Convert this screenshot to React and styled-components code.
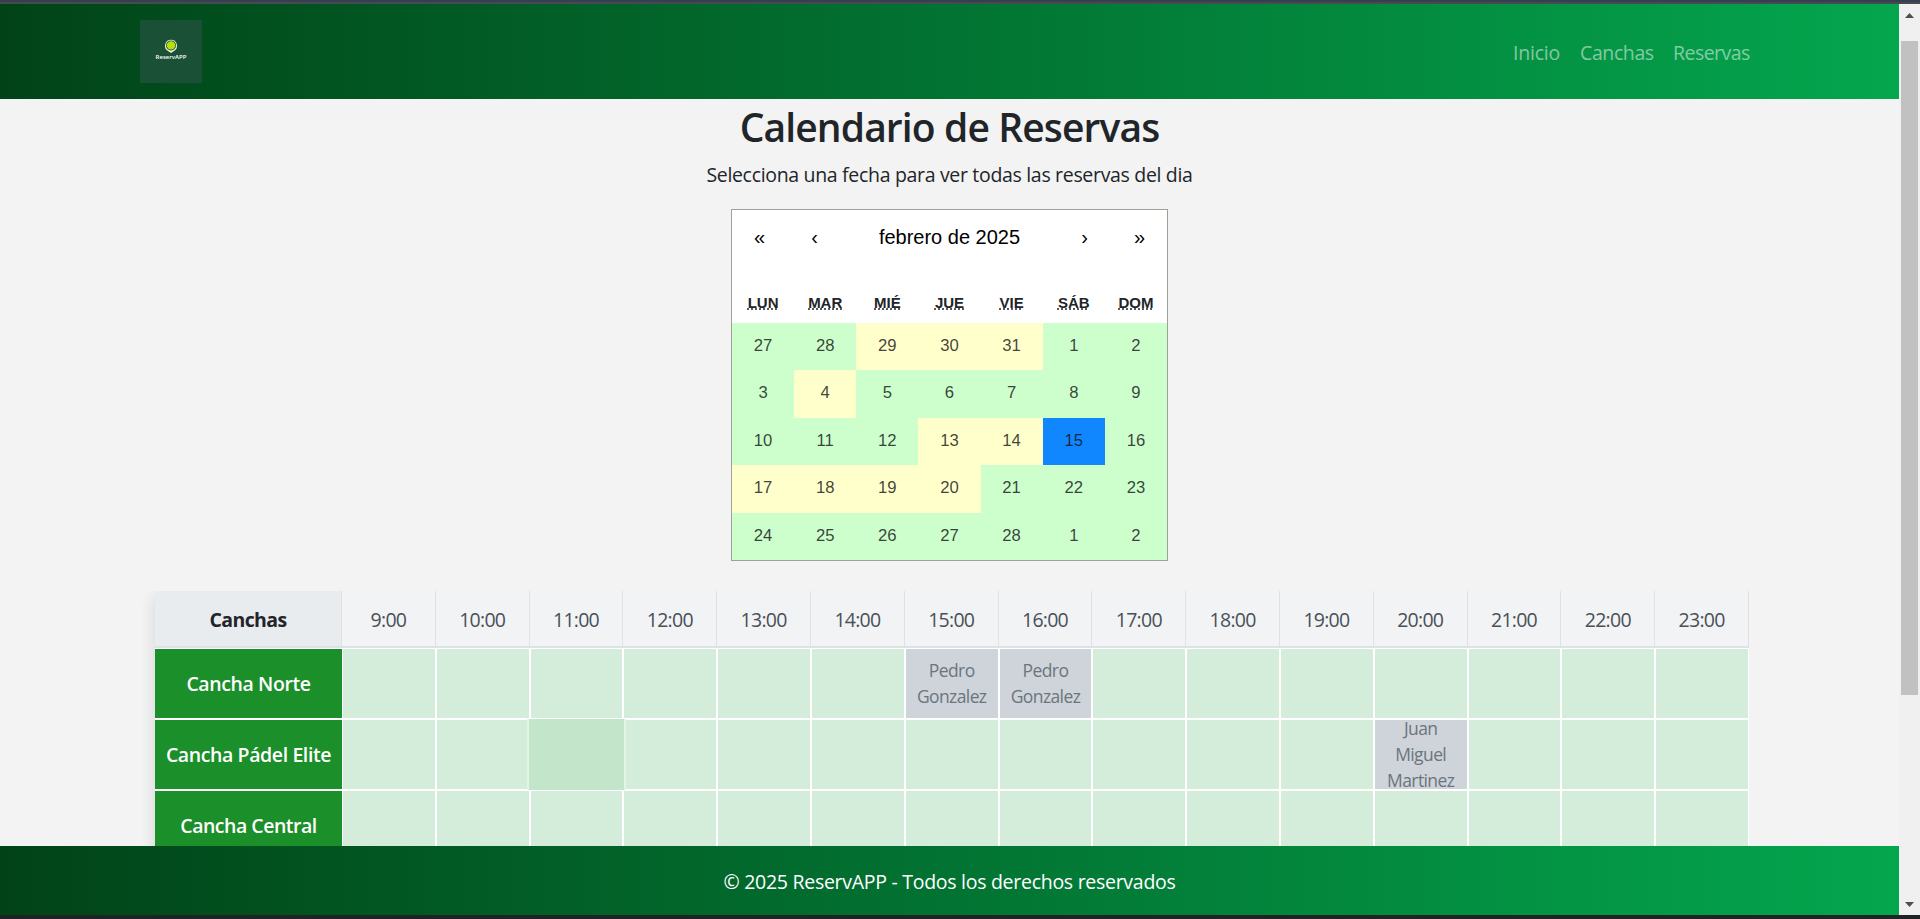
import React from "react";
import styled, { createGlobalStyle } from "styled-components";

const GlobalStyle = createGlobalStyle`
  *, *::before, *::after { box-sizing: border-box; }
  html, body, #root { height: 100%; }
  body {
    margin: 0;
    overflow: hidden;
    background: #f3f3f3;
    color: #212529;
    font-family: "Open Sans", "Noto Sans", sans-serif;
    font-size: 19.5px;
    line-height: 30px;
  }
`;

const gradient = "linear-gradient(90deg, #014317 0%, #027332 50%, #04a64e 100%)";

const Window = styled.div`
  height: 919px;
  display: flex;
  flex-direction: column;
  border-top: 2px solid #363e52;
  border-bottom: 4px solid #202324;
`;

const TopEdge = styled.div`
  height: 2px;
  flex: none;
  background: #454c50;
`;

const Viewport = styled.div`
  flex: 1;
  min-height: 0;
  display: flex;
`;

const Page = styled.div`
  width: 1899px;
  display: flex;
  flex-direction: column;
`;

const Header = styled.header`
  height: 95px;
  flex: none;
  display: flex;
  align-items: center;
  justify-content: space-between;
  padding: 0 139px 0 140px;
  background: ${gradient};
`;

const Logo = styled.a`
  display: flex;
  flex-direction: column;
  align-items: center;
  width: 62px;
  height: 63px;
  padding-top: 19px;
  background: #1a5035;
`;

const LogoName = styled.span`
  margin-top: -1px;
  color: #fff;
  font-size: 6px;
  line-height: 8px;
  font-weight: 600;
`;

const Nav = styled.nav`
  display: flex;
  padding-top: 2px;
`;

const NavLink = styled.a`
  width: ${(p) => p.$width}px;
  padding: 0 10px;
  white-space: nowrap;
  color: rgba(255, 255, 255, 0.5);
  letter-spacing: ${(p) => p.$spacing}px;
`;

const Main = styled.main`
  flex: 1;
  min-height: 0;
  overflow: hidden;
  display: flex;
  flex-direction: column;
  align-items: center;
  background: #f3f3f3;
`;

const Title = styled.h1`
  margin: 4px 0 0;
  font-size: 39px;
  line-height: 48px;
  font-weight: 600;
  letter-spacing: -0.88px;
`;

const Subtitle = styled.p`
  margin: 9px 0 19px;
  letter-spacing: -0.32px;
`;

const Calendar = styled.section`
  flex: none;
  width: 437px;
  height: 352px;
  border: 1px solid #a0a096;
  background: #fff;
  font-family: "Liberation Sans", Arial, sans-serif;
`;

const CalendarNav = styled.div`
  display: flex;
  height: 55px;
  color: #000;
  font-size: 20px;
  line-height: 55px;
  text-align: center;
`;

const Arrow = styled.span`
  width: 55px;
`;

const Month = styled.span`
  flex: 1;
`;

const Weekdays = styled.div`
  display: grid;
  grid-template-columns: repeat(7, 1fr);
  height: 58px;
  padding-top: 28px;
  font-size: 15px;
  line-height: 20px;
  font-weight: 700;
  text-align: center;
`;

const Weekday = styled.abbr`
  text-decoration: underline dotted;
`;

const Days = styled.div`
  display: grid;
  grid-template-columns: repeat(7, 1fr);
  grid-template-rows: repeat(5, 1fr);
  height: 237px;
`;

const dayColors = { free: "#ccffcc", partial: "#ffffcc", selected: "#1087ff" };

const Day = styled.span`
  padding-top: 13px;
  background: ${(p) => dayColors[p.$state]};
  color: rgba(16, 16, 16, 0.8);
  font-size: 16.67px;
  line-height: 20px;
  text-align: center;
`;

const Schedule = styled.section`
  flex: none;
  width: 1594px;
  margin: 30px 0 0 5px;
  box-shadow: 0 5px 15px rgba(0, 0, 0, 0.12);
  clip-path: inset(0 0 0 -20px);
`;

const Row = styled.div`
  display: grid;
  grid-template-columns: 187px repeat(15, 1fr);
  grid-template-rows: ${(p) => (p.$head ? 57 : 71)}px;
`;

const HeadCell = styled.div`
  display: flex;
  align-items: center;
  justify-content: center;
  border-right: 1px solid #dee2e6;
  border-bottom: 2px solid #dee2e6;
  padding-top: 3px;
  background: ${(p) => (p.$corner ? "#e9ecef" : "#f1f3f5")};
  color: ${(p) => (p.$corner ? "#212529" : "#495057")};
  font-weight: ${(p) => (p.$corner ? 700 : 400)};
  letter-spacing: ${(p) => (p.$corner ? -0.6 : -0.75)}px;
`;

const CourtName = styled.div`
  display: flex;
  align-items: center;
  justify-content: center;
  border: solid #fff;
  border-width: 1px 0;
  background: #1b8f29;
  color: #fff;
  font-weight: 600;
  white-space: nowrap;
  letter-spacing: ${(p) => p.$spacing}px;
`;

const slotColors = { free: "#d4edda", reserved: "#ced4da", hovered: "#c3e6cb" };

const Slot = styled.div`
  display: flex;
  align-items: center;
  justify-content: center;
  border: 1px solid ${(p) => (p.$state === "hovered" ? "#c3e6cb" : "#fff")};
  background: ${(p) => slotColors[p.$state]};
  color: #6c757d;
  font-size: 17.5px;
  line-height: 26px;
  letter-spacing: -0.6px;
  text-align: center;
  ${(p) =>
    p.$state === "hovered" &&
    `
    margin: 0 -1px;
    z-index: 1;
    box-shadow: -2px 0 #e3f4e6, 2px 0 #e3f4e6;
  `}
`;

const Guest = styled.span`
  width: 74px;
  margin-top: -2px;
`;

const Footer = styled.footer`
  height: 69px;
  flex: none;
  display: flex;
  align-items: center;
  justify-content: center;
  padding-top: 3px;
  background: ${gradient};
  color: #fff;
  letter-spacing: -0.28px;
`;

const Scrollbar = styled.div`
  width: 21px;
  display: flex;
  flex-direction: column;
  align-items: center;
  justify-content: space-between;
  padding: 9px 2px 8px 2px;
  background: #f0f0f0;
`;

const Track = styled.div`
  flex: 1;
  width: 17px;
  padding-top: 23px;
`;

const Thumb = styled.div`
  height: 654px;
  background: #c1c1c1;
`;

const ScrollArrow = ({ d }) => (
  <svg width="9" height="5" viewBox="0 0 9 5">
    <path d={d} fill="#505050" />
  </svg>
);

const Ball = () => (
  <svg width="14" height="15" viewBox="0 0 14 15">
    <path d="M7 0.7a6 6 0 0 1 3 11.2L7 14 4 11.9A6 6 0 0 1 7 .7z" fill="#e4eee3" />
    <circle cx="7" cy="6.4" r="5" fill="#2b5a2c" />
    <circle cx="7" cy="6.4" r="4.2" fill="#b9df05" />
  </svg>
);

const weekdays = ["LUN", "MAR", "MIÉ", "JUE", "VIE", "SÁB", "DOM"];
const days = [
  27, 28, 29, 30, 31, 1, 2, 3, 4, 5, 6, 7, 8, 9, 10, 11, 12, 13, 14, 15, 16, 17,
  18, 19, 20, 21, 22, 23, 24, 25, 26, 27, 28, 1, 2,
];
const partialDays = [2, 3, 4, 8, 17, 18, 21, 22, 23, 24];
const selectedDay = 19;

const hours = Array.from({ length: 15 }, (_, i) => i + 9);
const courts = [
  { name: "Cancha Norte", spacing: -0.4, reserved: { 15: "Pedro Gonzalez", 16: "Pedro Gonzalez" } },
  { name: "Cancha Pádel Elite", spacing: -0.4, reserved: { 20: "Juan Miguel Martinez" }, hovered: 11 },
  { name: "Cancha Central", spacing: -0.5, reserved: {} },
];

const dayState = (i) =>
  i === selectedDay ? "selected" : partialDays.includes(i) ? "partial" : "free";

const slotState = (court, hour) =>
  court.reserved[hour] ? "reserved" : court.hovered === hour ? "hovered" : "free";

export default function App() {
  return (
    <>
      <GlobalStyle />
      <Window>
        <TopEdge />
        <Viewport>
          <Page>
            <Header>
              <Logo>
                <Ball />
                <LogoName>ReservAPP</LogoName>
              </Logo>
              <Nav>
                <NavLink $width={67} $spacing={-0.2}>Inicio</NavLink>
                <NavLink $width={93} $spacing={-0.4}>Canchas</NavLink>
                <NavLink $width={97} $spacing={-0.55}>Reservas</NavLink>
              </Nav>
            </Header>
            <Main>
              <Title>Calendario de Reservas</Title>
              <Subtitle>Selecciona una fecha para ver todas las reservas del dia</Subtitle>
              <Calendar>
                <CalendarNav>
                  <Arrow>«</Arrow>
                  <Arrow>‹</Arrow>
                  <Month>febrero de 2025</Month>
                  <Arrow>›</Arrow>
                  <Arrow>»</Arrow>
                </CalendarNav>
                <Weekdays>
                  {weekdays.map((d) => (
                    <Weekday key={d}>{d}</Weekday>
                  ))}
                </Weekdays>
                <Days>
                  {days.map((d, i) => (
                    <Day key={i} $state={dayState(i)}>{d}</Day>
                  ))}
                </Days>
              </Calendar>
              <Schedule>
                <Row $head>
                  <HeadCell $corner>Canchas</HeadCell>
                  {hours.map((h) => (
                    <HeadCell key={h}>{h}:00</HeadCell>
                  ))}
                </Row>
                {courts.map((c) => (
                  <Row key={c.name}>
                    <CourtName $spacing={c.spacing}>{c.name}</CourtName>
                    {hours.map((h) => (
                      <Slot key={h} $state={slotState(c, h)}>
                        {c.reserved[h] && <Guest>{c.reserved[h]}</Guest>}
                      </Slot>
                    ))}
                  </Row>
                ))}
              </Schedule>
            </Main>
            <Footer>© 2025 ReservAPP - Todos los derechos reservados</Footer>
          </Page>
          <Scrollbar>
            <ScrollArrow d="M0 5 4.5 0 9 5z" />
            <Track>
              <Thumb />
            </Track>
            <ScrollArrow d="M0 0h9L4.5 5z" />
          </Scrollbar>
        </Viewport>
      </Window>
    </>
  );
}
